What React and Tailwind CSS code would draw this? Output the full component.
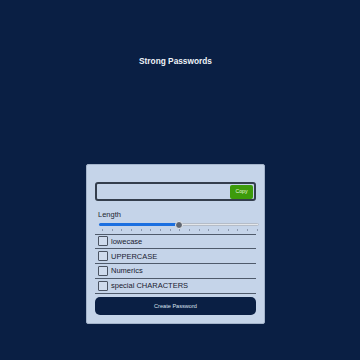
import React, { useState } from 'react';

const options = ['lowecase', 'UPPERCASE', 'Numerics', 'special CHARACTERS'];

const App = () => {
    const [checked, setChecked] = useState({});
    const length = 50;
    const ticks = Array.from({ length: 17 }, (_, i) => i);

    return (
        <div
            className="min-h-screen w-full bg-[#0a1f44] flex flex-col items-center pr-[9px]"
            style={{ fontFamily: '"Liberation Sans", Arial, sans-serif' }}
        >
            {/* Title */}
            <h1 className="pt-[56px] h-[66px] text-[8.3px] leading-[10px] font-bold text-[#eef2f8]">
                Strong Passwords
            </h1>

            {/* Card */}
            <div className="mt-[98px] w-[179px] bg-[#c5d4e9] border border-[#a3b3ca] rounded-[2px] px-[8px] pt-[17px] pb-[8px] flex flex-col">
                {/* Output */}
                <div className="h-[19px] border-2 border-[#343e4d] rounded-[3px] flex items-center justify-end pr-[1px]">
                    <button className="h-[14px] w-[23px] bg-[#3d9b0b] rounded-[2px] text-[5.2px] text-[#e8f5dc] flex items-center justify-center">
                        Copy
                    </button>
                </div>

                <label className="mt-[8.5px] h-[9px] pl-[3px] text-[7.5px] leading-[9px] text-[#1d2533]">
                    Length
                </label>

                {/* Slider */}
                <div className="relative h-[13px] ml-[4px] -mr-[3px]">
                    <div className="absolute left-0 right-0 top-[4.5px] h-[3px] rounded-full bg-[#e3e6ea] border-[0.5px] border-[#b4bcc8]" />
                    <div
                        className="absolute left-0 top-[4.5px] h-[3px] rounded-full bg-[#1b6fe0]"
                        style={{ width: `${length}%` }}
                    />
                    <div
                        className="absolute top-[2px] w-[8px] h-[8px] -ml-[4px] rounded-full bg-[#5f6672] border border-[#e7ebf0]"
                        style={{ left: `${length}%` }}
                    />
                    {ticks.map(t => (
                        <div
                            key={t}
                            className="absolute top-[10px] w-[1px] h-[2px] bg-[#8d9ab0]"
                            style={{ left: `${2 + t * 6.03}%` }}
                        />
                    ))}
                </div>

                <div className="mt-[2px] h-[1px] bg-[#4f5a6b]" />

                {/* Options */}
                {options.map(opt => (
                    <div
                        key={opt}
                        className="h-[14.75px] border-b border-[#4f5a6b] flex items-center pl-[3px] gap-[3px] cursor-pointer"
                        onClick={() => setChecked(prev => ({ ...prev, [opt]: !prev[opt] }))}
                    >
                        <span className="w-[10px] h-[10px] border border-[#4a5362] rounded-[1px] bg-[#cfdbed] flex items-center justify-center text-[7px]">
                            {checked[opt] ? '✓' : ''}
                        </span>
                        <span className="text-[7.5px] leading-[9px] text-[#1a2130]">{opt}</span>
                    </div>
                ))}

                <button className="mt-[3.5px] h-[18px] bg-[#0a1f44] rounded-[5px] text-[5.6px] text-[#d9e2ef] flex items-center justify-center">
                    Create Password
                </button>
            </div>
        </div>
    );
};

export default App;
